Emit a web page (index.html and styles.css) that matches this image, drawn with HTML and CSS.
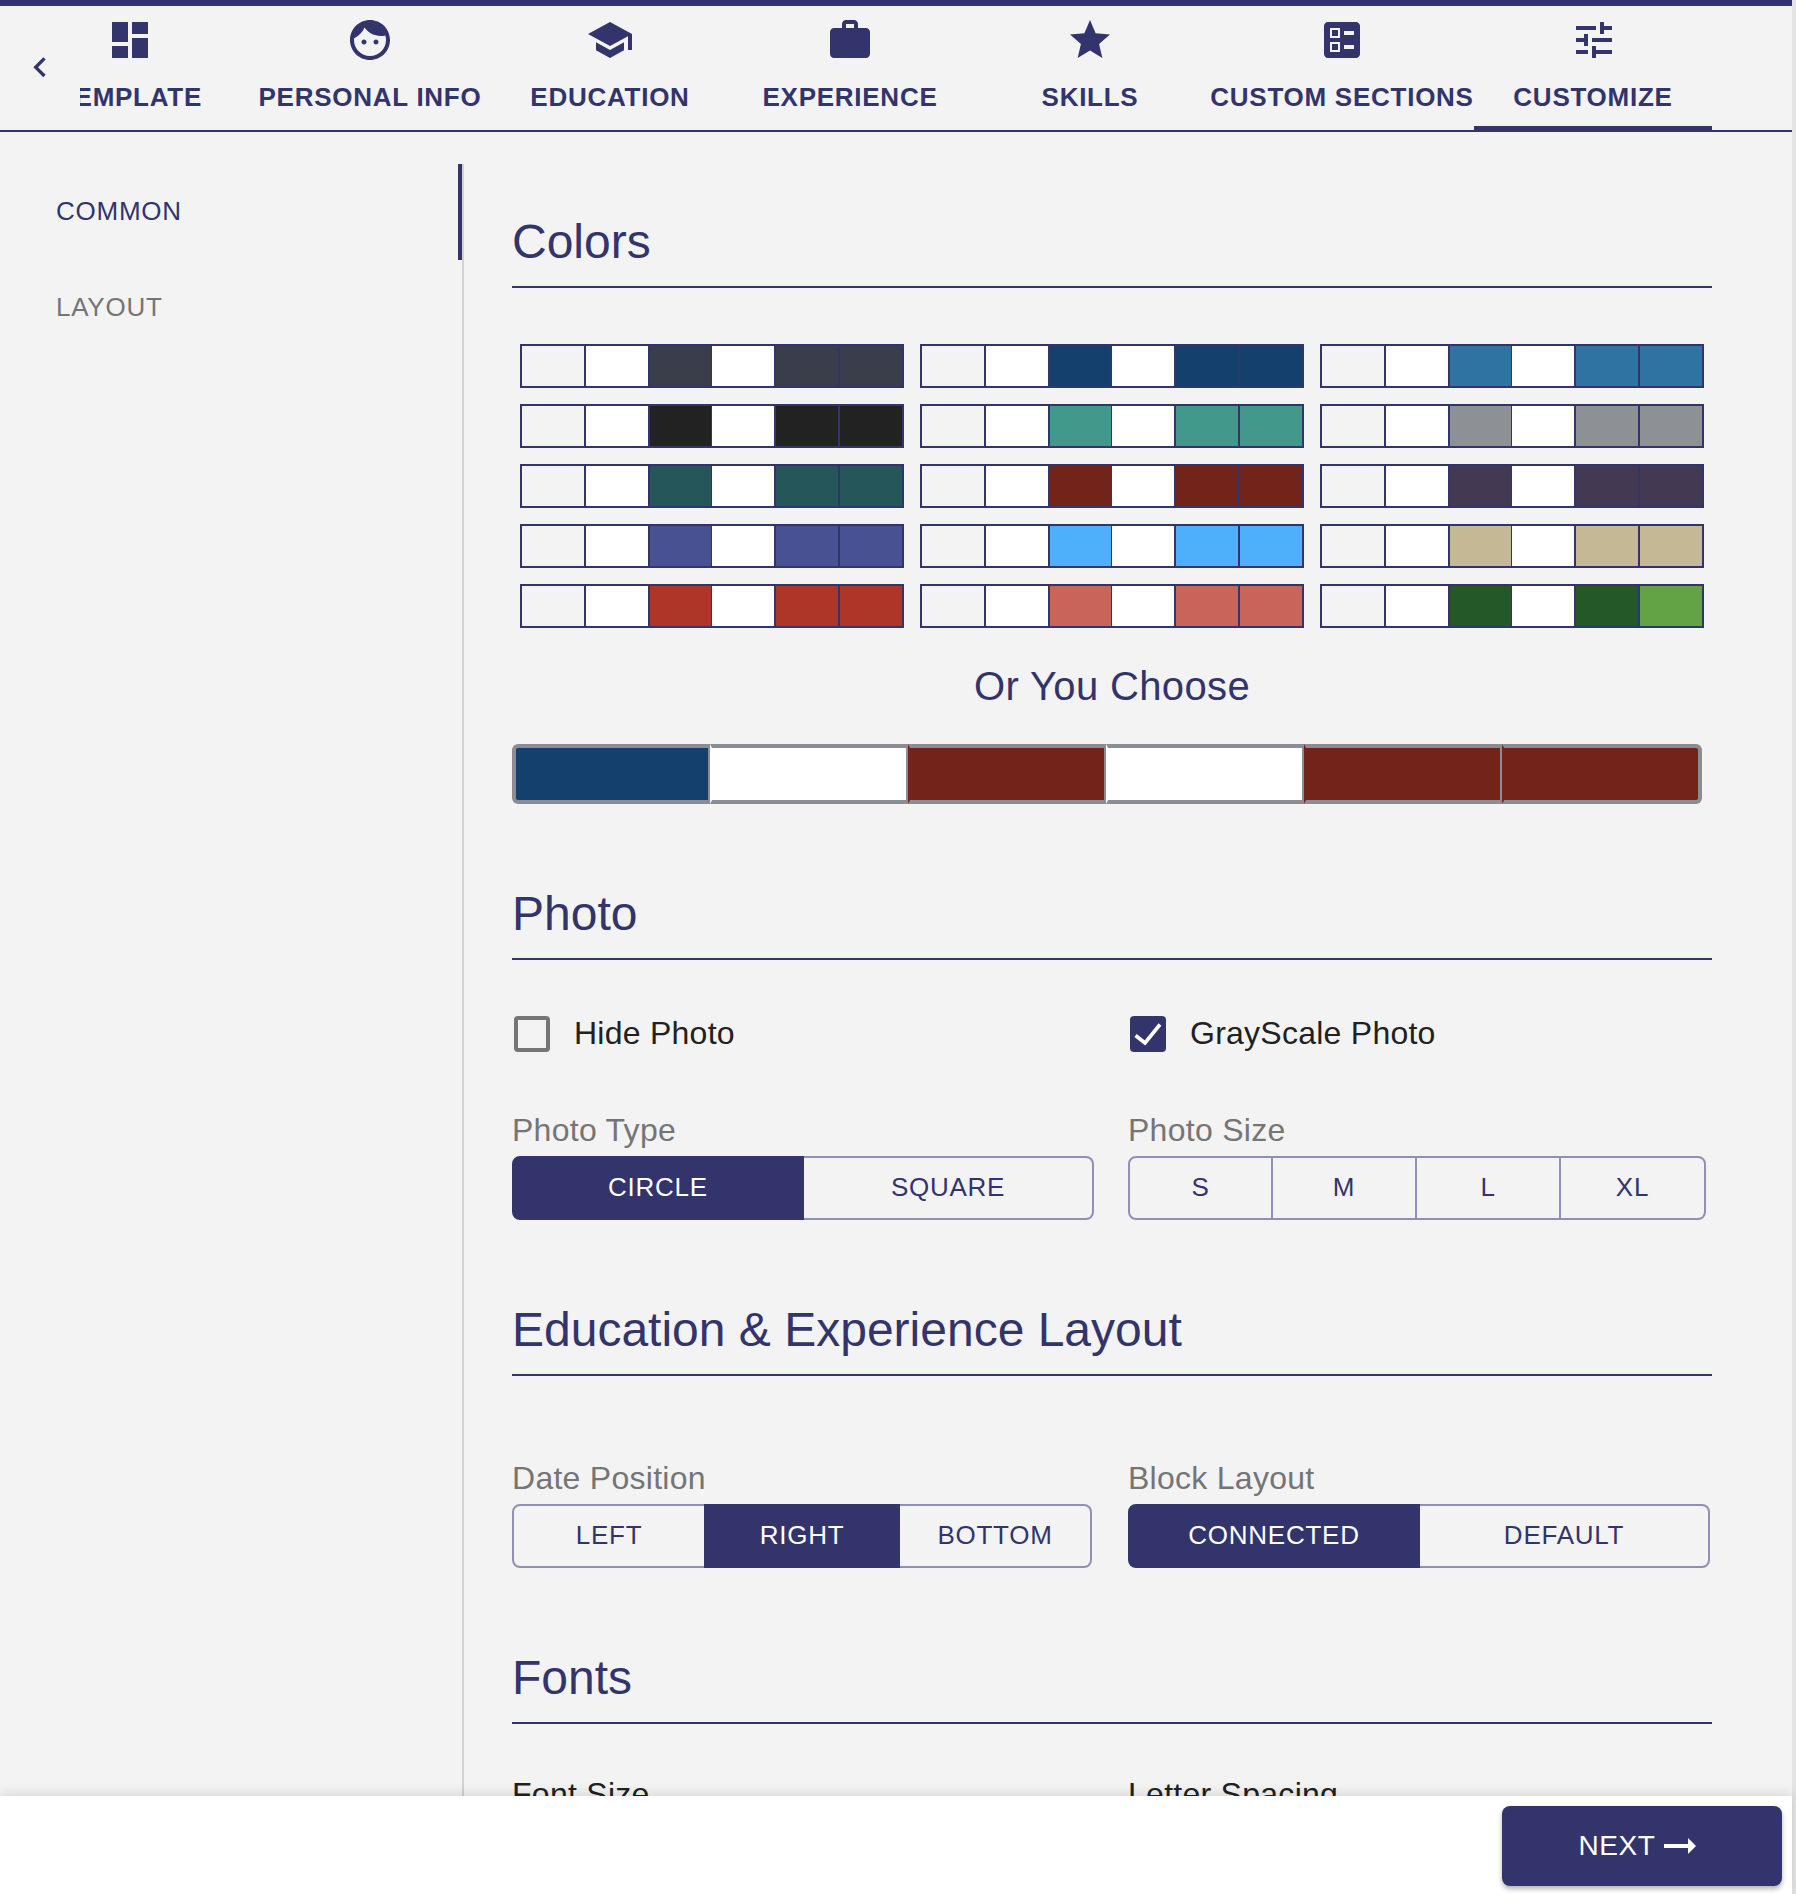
FILE: index.html
```html
<!DOCTYPE html>
<html lang="en">
<head>
<meta charset="utf-8">
<title>Customize</title>
<link rel="stylesheet" href="styles.css">
</head>
<body>
<div class="app">
  <header class="nav">
    <button class="nav-back" aria-label="Back">
      <svg class="ic-back" viewBox="0 0 24 24"><path d="M15.41 16.09l-4.58-4.59 4.58-4.59L14 5.5l-6 6 6 6z"/></svg>
    </button>
    <div class="nav-scroll">
      <div class="nav-tabs">
        <div class="tab">
          <svg class="ic" viewBox="0 0 24 24"><path d="M3 13h8V3H3v10zm0 8h8v-6H3v6zm10 0h8V11h-8v10zm0-18v6h8V3h-8z"/></svg>
          <span class="tab-label">TEMPLATE</span>
        </div>
        <div class="tab">
          <svg class="ic" viewBox="0 0 24 24"><path d="M9 11.75c-.69 0-1.25.56-1.25 1.25s.56 1.25 1.25 1.25 1.25-.56 1.25-1.25-.56-1.25-1.25-1.25zm6 0c-.69 0-1.25.56-1.25 1.25s.56 1.25 1.25 1.25 1.25-.56 1.25-1.25-.56-1.25-1.25-1.25zM12 2C6.48 2 2 6.48 2 12s4.48 10 10 10 10-4.48 10-10S17.52 2 12 2zm0 18c-4.41 0-8-3.59-8-8 0-.29.02-.58.05-.86 2.36-1.05 4.23-2.98 5.21-5.37C11.07 8.33 14.05 10 17.42 10c.78 0 1.53-.09 2.25-.26.21.71.33 1.47.33 2.26 0 4.41-3.59 8-8 8z"/></svg>
          <span class="tab-label">PERSONAL INFO</span>
        </div>
        <div class="tab">
          <svg class="ic" viewBox="0 0 24 24"><path d="M5 13.18v4L12 21l7-3.82v-4L12 17l-7-3.82zM12 3L1 9l11 6 9-4.91V17h2V9L12 3z"/></svg>
          <span class="tab-label">EDUCATION</span>
        </div>
        <div class="tab">
          <svg class="ic" viewBox="0 0 24 24"><path d="M20 6h-4V4c0-1.11-.89-2-2-2h-4c-1.11 0-2 .89-2 2v2H4c-1.11 0-1.99.89-1.99 2L2 19c0 1.11.89 2 2 2h16c1.11 0 2-.89 2-2V8c0-1.11-.89-2-2-2zm-6 0h-4V4h4v2z"/></svg>
          <span class="tab-label">EXPERIENCE</span>
        </div>
        <div class="tab">
          <svg class="ic" viewBox="0 0 24 24"><path d="M12 17.27L18.18 21l-1.64-7.03L22 9.24l-7.19-.61L12 2 9.19 8.63 2 9.24l5.46 4.73L5.82 21z"/></svg>
          <span class="tab-label">SKILLS</span>
        </div>
        <div class="tab">
          <svg class="ic" viewBox="0 0 24 24"><path d="M13 9.5h5v-2h-5v2zm0 7h5v-2h-5v2zm6 4.5H5c-1.1 0-2-.9-2-2V5c0-1.1.9-2 2-2h14c1.1 0 2 .9 2 2v14c0 1.1-.9 2-2 2zM6 11h5V6H6v5zm1-4h3v3H7V7zM6 18h5v-5H6v5zm1-4h3v3H7v-3z"/></svg>
          <span class="tab-label">CUSTOM SECTIONS</span>
        </div>
        <div class="tab tab-active">
          <svg class="ic" viewBox="0 0 24 24"><path d="M3 17v2h6v-2H3zM3 5v2h10V5H3zm10 16v-2h8v-2h-8v-2h-2v6h2zM7 9v2H3v2h4v2h2V9H7zm14 4v-2H11v2h10zm-6-4h2V7h4V5h-4V3h-2v6z"/></svg>
          <span class="tab-label">CUSTOMIZE</span>
        </div>
      </div>
    </div>
  </header>

  <div class="main">
    <aside class="side">
      <div class="side-item side-item-active">COMMON</div>
      <div class="side-item">LAYOUT</div>
    </aside>

    <section class="content">
      <h2 class="heading">Colors</h2>
      <div class="palettes">
        <div class="palette"><i class="c c-bg"></i><i class="c c-w"></i><i class="c c-slate"></i><i class="c c-w"></i><i class="c c-slate"></i><i class="c c-slate"></i></div>
        <div class="palette"><i class="c c-bg"></i><i class="c c-w"></i><i class="c c-navy"></i><i class="c c-w"></i><i class="c c-navy"></i><i class="c c-navy"></i></div>
        <div class="palette"><i class="c c-bg"></i><i class="c c-w"></i><i class="c c-steel"></i><i class="c c-w"></i><i class="c c-steel"></i><i class="c c-steel"></i></div>
        <div class="palette"><i class="c c-bg"></i><i class="c c-w"></i><i class="c c-black"></i><i class="c c-w"></i><i class="c c-black"></i><i class="c c-black"></i></div>
        <div class="palette"><i class="c c-bg"></i><i class="c c-w"></i><i class="c c-teal"></i><i class="c c-w"></i><i class="c c-teal"></i><i class="c c-teal"></i></div>
        <div class="palette"><i class="c c-bg"></i><i class="c c-w"></i><i class="c c-gray"></i><i class="c c-w"></i><i class="c c-gray"></i><i class="c c-gray"></i></div>
        <div class="palette"><i class="c c-bg"></i><i class="c c-w"></i><i class="c c-pine"></i><i class="c c-w"></i><i class="c c-pine"></i><i class="c c-pine"></i></div>
        <div class="palette"><i class="c c-bg"></i><i class="c c-w"></i><i class="c c-maroon"></i><i class="c c-w"></i><i class="c c-maroon"></i><i class="c c-maroon"></i></div>
        <div class="palette"><i class="c c-bg"></i><i class="c c-w"></i><i class="c c-plum"></i><i class="c c-w"></i><i class="c c-plum"></i><i class="c c-plum"></i></div>
        <div class="palette"><i class="c c-bg"></i><i class="c c-w"></i><i class="c c-indigo"></i><i class="c c-w"></i><i class="c c-indigo"></i><i class="c c-indigo"></i></div>
        <div class="palette"><i class="c c-bg"></i><i class="c c-w"></i><i class="c c-sky"></i><i class="c c-w"></i><i class="c c-sky"></i><i class="c c-sky"></i></div>
        <div class="palette"><i class="c c-bg"></i><i class="c c-w"></i><i class="c c-sand"></i><i class="c c-w"></i><i class="c c-sand"></i><i class="c c-sand"></i></div>
        <div class="palette"><i class="c c-bg"></i><i class="c c-w"></i><i class="c c-red"></i><i class="c c-w"></i><i class="c c-red"></i><i class="c c-red"></i></div>
        <div class="palette"><i class="c c-bg"></i><i class="c c-w"></i><i class="c c-coral"></i><i class="c c-w"></i><i class="c c-coral"></i><i class="c c-coral"></i></div>
        <div class="palette"><i class="c c-bg"></i><i class="c c-w"></i><i class="c c-forest"></i><i class="c c-w"></i><i class="c c-forest"></i><i class="c c-leaf"></i></div>
      </div>
      <h3 class="choose">Or You Choose</h3>
      <div class="picker">
        <i class="p p-navy"></i><i class="p p-w"></i><i class="p p-maroon"></i><i class="p p-w"></i><i class="p p-maroon"></i><i class="p p-maroon"></i>
      </div>

      <h2 class="heading heading-next">Photo</h2>
      <div class="two checks">
        <label class="check"><span class="box"></span><span>Hide Photo</span></label>
        <label class="check"><span class="box box-on"><svg class="tick" viewBox="0 0 28 28"><path d="M1.5 15.5L11 23 26 4.5"/></svg></span><span>GrayScale Photo</span></label>
      </div>
      <div class="two fields-photo">
        <div>
          <div class="field-label">Photo Type</div>
          <div class="seg seg-type"><span class="seg-btn seg-on">CIRCLE</span><span class="seg-btn">SQUARE</span></div>
        </div>
        <div>
          <div class="field-label">Photo Size</div>
          <div class="seg seg-size"><span class="seg-btn">S</span><span class="seg-btn">M</span><span class="seg-btn">L</span><span class="seg-btn">XL</span></div>
        </div>
      </div>

      <h2 class="heading heading-next">Education &amp; Experience Layout</h2>
      <div class="two fields-layout">
        <div>
          <div class="field-label">Date Position</div>
          <div class="seg seg-date"><span class="seg-btn">LEFT</span><span class="seg-btn seg-on">RIGHT</span><span class="seg-btn">BOTTOM</span></div>
        </div>
        <div>
          <div class="field-label">Block Layout</div>
          <div class="seg seg-block"><span class="seg-btn seg-on">CONNECTED</span><span class="seg-btn">DEFAULT</span></div>
        </div>
      </div>

      <h2 class="heading heading-next">Fonts</h2>
      <div class="two fields-fonts">
        <div class="field-label field-label-dark">Font Size</div>
        <div class="field-label field-label-dark">Letter Spacing</div>
      </div>
    </section>
  </div>

  <footer class="footer">
    <button class="next">NEXT<svg class="ic-next" viewBox="0 0 24 24"><path d="M16.01 11H4v2h12.01v3L20 12l-3.99-4z"/></svg></button>
  </footer>
</div>
</body>
</html>
```
FILE: styles.css
```css
* { box-sizing: border-box; }
html, body { margin: 0; padding: 0; }
body {
  width: 1796px;
  height: 1894px;
  overflow: hidden;
  background: #e4e4e4;
  font-family: "Liberation Sans", Arial, sans-serif;
  color: #32346b;
}
.app { width: 1792px; height: 1894px; display: flex; flex-direction: column; background: #f3f3f3; }

/* top navigation */
.nav {
  flex: none;
  height: 132px;
  display: flex;
  border-top: 6px solid #32346b;
  border-bottom: 2px solid #32346b;
}
.nav-back {
  flex: none;
  width: 80px;
  padding: 0;
  border: 0;
  background: none;
  display: flex;
  align-items: center;
  justify-content: center;
}
.ic-back { width: 40px; height: 40px; fill: #32346b; }
.nav-scroll { width: 1632px; overflow: hidden; }
.nav-tabs {
  display: grid;
  grid-template-columns: 240px 240px 240px 240px 240px 264px 238px;
  height: 124px;
  margin-left: -70px;
  width: 1702px;
}
.tab {
  display: flex;
  flex-direction: column;
  align-items: center;
  padding-top: 10px;
  height: 124px;
}
.tab-active { border-bottom: 4px solid #32346b; }
.tab-active .ic { margin-left: 2px; }
.ic { width: 48px; height: 48px; fill: #32346b; flex: none; }
.tab-label {
  margin-top: 17px;
  font-size: 26px;
  line-height: 32px;
  font-weight: 700;
  letter-spacing: .74px;
  white-space: nowrap;
}

/* body */
.main { flex: none; height: 1664px; display: flex; overflow: hidden; }
.side {
  flex: none;
  width: 464px;
  margin-top: 32px;
  border-right: 2px solid #d2d2d2;
}
.side-item {
  height: 96px;
  padding: 0 0 2px 56px;
  display: flex;
  align-items: center;
  font-size: 26px;
  letter-spacing: .74px;
  color: #757575;
}
.side-item-active { color: #32346b; border-right: 4px solid #32346b; }

.content { flex: none; width: 1200px; margin-left: 48px; padding-top: 80px; }
.heading {
  margin: 0;
  height: 76px;
  padding: 2px 0 16px;
  font-size: 48px;
  line-height: 56px;
  font-weight: 400;
  border-bottom: 2px solid #32346b;
}
.heading-next { margin-top: 80px; }

.palettes {
  margin-top: 56px;
  display: grid;
  grid-template-columns: repeat(3, 400px);
  row-gap: 16px;
}
.palette {
  width: 384px;
  height: 44px;
  margin-left: 8px;
  display: flex;
  border: 2px solid #32346b;
}
.c { display: block; width: 64px; border-left: 2px solid #32346b; }
.c:first-child { width: 62px; border-left: 0; }
.c:nth-child(3) { border-right: 1px solid #32346b; }
.c:nth-child(4) { width: 62px; border-left: 0; }
.c-bg { background: #f3f3f3; }
.c-w { background: #fff; }
.c-slate { background: #3a3e4a; }
.c-navy { background: #14406e; }
.c-steel { background: #2f73a3; }
.c-black { background: #222; }
.c-teal { background: #42998b; }
.c-gray { background: #8d9095; }
.c-pine { background: #25565a; }
.c-maroon { background: #72231a; }
.c-plum { background: #433953; }
.c-indigo { background: #485292; }
.c-sky { background: #4eb0fb; }
.c-sand { background: #c5b995; }
.c-red { background: #ae3629; }
.c-coral { background: #c96458; }
.c-forest { background: #255829; }
.c-leaf { background: #63a345; }

.choose {
  margin: 34px 0 34px;
  width: 1200px;
  text-align: center;
  font-size: 40px;
  line-height: 48px;
  font-weight: 400;
  letter-spacing: .36px;
}
.picker { width: 1190px; height: 60px; display: flex; }
.p {
  display: block;
  flex: 0 0 198px;
  border: 4px solid #8a8e93;
  border-left-width: 2px;
  border-right-width: 2px;
}
.p:first-child { border-left-width: 4px; border-radius: 6px 0 0 6px; }
.p:last-child { flex: 1; border-right-width: 4px; border-radius: 0 6px 6px 0; }
.p-navy { background: #14406e; border-left-color: #14406e; }
.p-w { background: #fff; border-left-color: #fff; }
.p-maroon { background: #72231a; border-left-color: #72231a; }
.p:first-child { border-left-color: #8a8e93; }

.two { display: grid; grid-template-columns: 616px 1fr; }
.checks { margin-top: 56px; padding-left: 2px; }
.check {
  display: flex;
  align-items: center;
  height: 34px;
  font-size: 32px;
  letter-spacing: .25px;
  color: #212121;
}
.box {
  flex: none;
  width: 36px;
  height: 36px;
  margin: 2px 24px 0 0;
  border: 4px solid #757575;
  border-radius: 4px;
}
.box-on { background: #32346b; border-color: #32346b; }
.tick { display: block; width: 28px; height: 28px; fill: none; stroke: #fff; stroke-width: 3.6; }

.fields-photo { margin-top: 60px; }
.fields-layout { margin-top: 82px; }
.fields-fonts { margin-top: 50px; }
.field-label { font-size: 32px; line-height: 40px; margin-bottom: 6px; letter-spacing: .27px; color: #757575; }
.field-label-dark { color: #212121; }

.seg { display: grid; height: 64px; }
.seg-type { width: 582px; grid-template-columns: 292px 290px; }
.seg-size { width: 578px; grid-template-columns: 145px 144px 144px 145px; }
.seg-date { width: 580px; grid-template-columns: 194px 194px 192px; }
.seg-block { width: 582px; grid-template-columns: 292px 290px; }
.seg-btn {
  display: flex;
  align-items: center;
  justify-content: center;
  border: 2px solid #8f90b3;
  border-left: 0;
  padding-bottom: 2px;
  font-size: 26px;
  letter-spacing: .74px;
  color: #32346b;
}
.seg-btn:first-child { border-left: 2px solid #8f90b3; border-radius: 8px 0 0 8px; }
.seg-btn:last-child { border-radius: 0 8px 8px 0; }
.seg-on { background: #32346b; border-color: #32346b; color: #fff; margin-left: -2px; border-left: 2px solid #32346b; }
.seg-btn.seg-on:first-child { margin-left: 0; border-color: #32346b; }

/* footer */
.footer {
  flex: none;
  height: 98px;
  background: #fff;
  box-shadow: 0 -2px 12px rgba(0, 0, 0, .12);
  position: relative;
  display: flex;
  justify-content: flex-end;
  padding: 10px 10px 0 0;
}
.next {
  width: 280px;
  height: 80px;
  border: 0;
  border-radius: 8px;
  background: #32346b;
  color: #fff;
  font-family: inherit;
  font-size: 28px;
  letter-spacing: .6px;
  display: flex;
  align-items: center;
  justify-content: center;
  box-shadow: 0 3px 5px rgba(0, 0, 0, .3);
  padding: 0 2px 0 0;
}
.ic-next { width: 48px; height: 48px; fill: #fff; }
```
